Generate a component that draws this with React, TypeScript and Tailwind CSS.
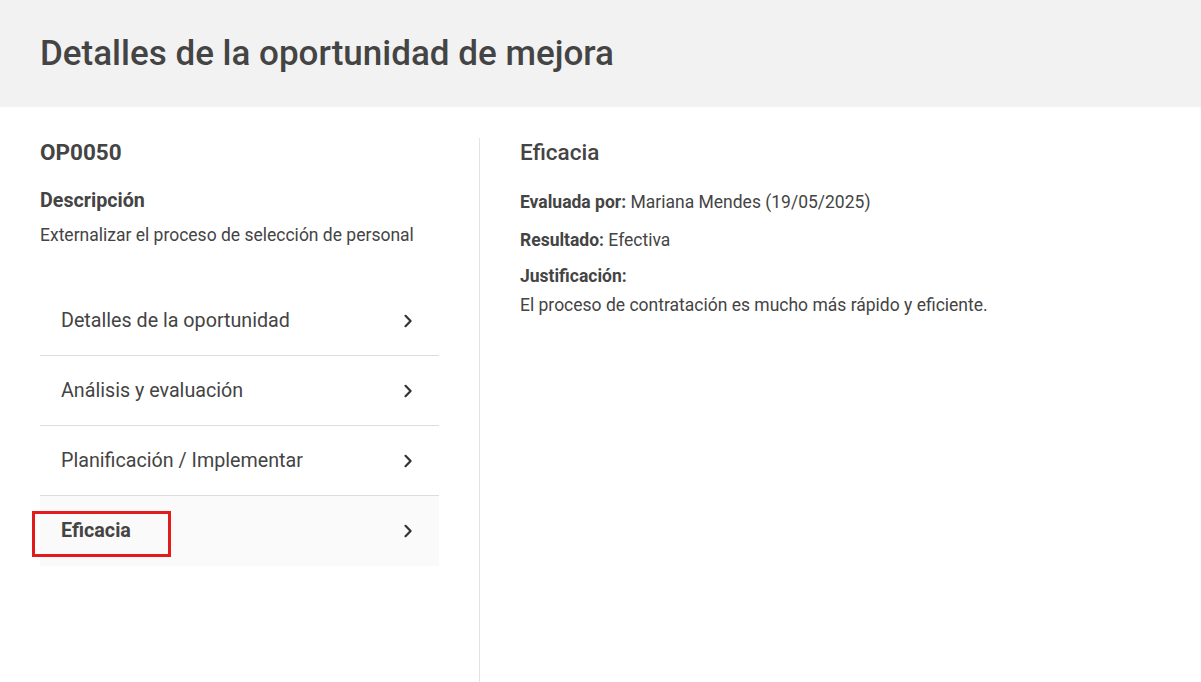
const sections = [
  "Detalles de la oportunidad",
  "Análisis y evaluación",
  "Planificación / Implementar",
  "Eficacia",
];

function Chevron() {
  return (
    <svg width="10" height="14" viewBox="0 0 10 14" fill="none" className="shrink-0">
      <path d="M2.5 1.8 L7.6 7 L2.5 12.2" stroke="#333" strokeWidth="2.2" strokeLinecap="round" strokeLinejoin="round" />
    </svg>
  );
}

export default function App() {
  const active = "Eficacia";

  return (
    <div className="min-h-screen bg-white font-['Roboto',sans-serif] text-[#444]">
      <header className="flex h-[107px] items-center bg-[#f2f2f2] px-10">
        <h1 className="text-[35px] font-medium leading-10 text-[#444]">Detalles de la oportunidad de mejora</h1>
      </header>

      <main className="flex pt-[31px] pl-10">
        <aside className="w-[399px] shrink-0">
          <h2 className="text-[22.5px] font-bold leading-7">OP0050</h2>
          <h3 className="mt-[21px] text-[19.7px] font-bold leading-7">Descripción</h3>
          <p className="mt-2 text-[17.5px] leading-6">Externalizar el proceso de selección de personal</p>

          <nav className="mt-[39px]">
            {sections.map((s, i) => {
              const isActive = s === active;
              return (
                <div
                  key={s}
                  className={
                    "relative flex h-[70px] items-center justify-between pl-[21px] pr-[26px] " +
                    (i < sections.length - 1 ? "border-b border-[#dddddd] " : "") +
                    (isActive ? "bg-[#fafafa]" : "")
                  }
                >
                  <span className={"text-[19.7px] leading-7 " + (isActive ? "font-bold" : "")}>{s}</span>
                  <Chevron />
                  {isActive && (
                    <div className="pointer-events-none absolute left-[-8px] top-[15px] h-[46px] w-[139px] border-[3px] border-[#e21b1b]" />
                  )}
                </div>
              );
            })}
          </nav>
        </aside>

        <div className="ml-10 min-h-[544px] border-l border-[#e3e3e3] pl-10">
          <h2 className="text-[22.5px] font-medium leading-7">Eficacia</h2>
          <p className="mt-6 text-[17.5px] leading-6">
            <span className="font-bold">Evaluada por:</span> Mariana Mendes (19/05/2025)
          </p>
          <p className="mt-[14px] text-[17.5px] leading-6">
            <span className="font-bold">Resultado:</span> Efectiva
          </p>
          <p className="mt-3 text-[17.5px] font-bold leading-6">Justificación:</p>
          <p className="mt-[5px] text-[17.5px] leading-6">El proceso de contratación es mucho más rápido y eficiente.</p>
        </div>
      </main>
    </div>
  );
}
